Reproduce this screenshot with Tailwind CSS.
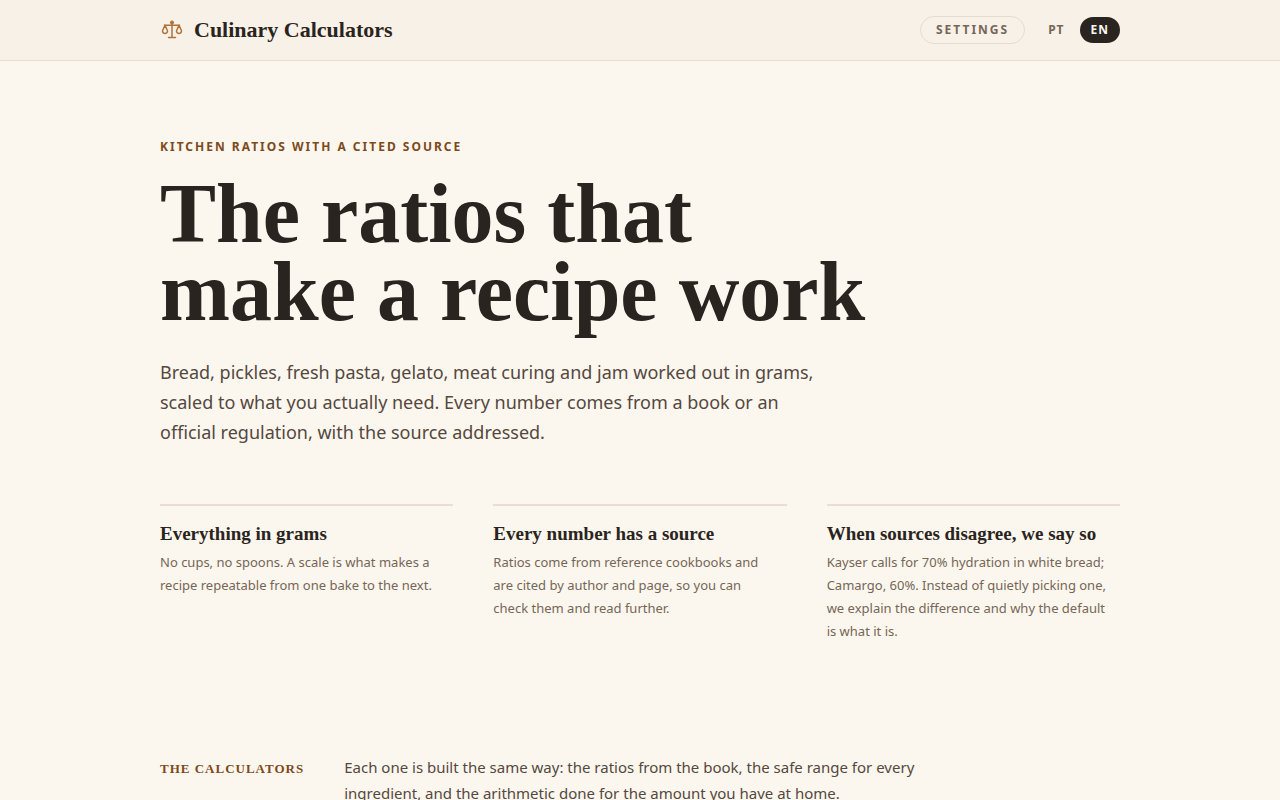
<!DOCTYPE html>
<html lang="en">
<head>
    <meta charset="UTF-8">
    <meta name="viewport" content="width=device-width, initial-scale=1.0">
    <title>Culinary Calculators</title>
    <script src="https://cdn.jsdelivr.net/npm/@tailwindcss/browser@4"></script>
</head>
<body class="min-h-screen bg-[#fcf7ee] font-['Noto_Sans',sans-serif] text-[#2a2420]">

    <header class="border-b border-[#e8dcd0] bg-[#f8f1e7]">
        <div class="mx-auto flex h-15 max-w-[1008px] items-center justify-between px-6">
            <a href="#" class="flex items-center gap-2.5 font-['Liberation_Serif',serif] text-[22px] leading-7 font-bold">
                <svg class="size-6 text-[#b0713a]" viewBox="0 0 24 24" fill="none" stroke="currentColor" stroke-width="1.5" stroke-linecap="round" stroke-linejoin="round" aria-hidden="true">
                    <circle cx="12" cy="4.5" r="1.6" fill="currentColor" stroke-width="1"/>
                    <path d="M12 5v14.5M8.5 19.5h7M4.5 7.2h15"/>
                    <path d="M5 7.2 2.5 12.8c-.3 3.6 5.3 3.6 5 0Z"/>
                    <path d="m19 7.2-2.5 5.6c-.3 3.6 5.3 3.6 5 0Z"/>
                </svg>
                Culinary Calculators
            </a>
            <nav class="flex items-center gap-3 text-xs leading-4 font-bold text-[#756657]">
                <button type="button" class="rounded-full border border-[#e8dcd0] px-[15px] py-[5px] tracking-[2px]">SETTINGS</button>
                <div class="flex gap-1 tracking-[1px]">
                    <a href="#" class="px-[11px] py-[5px]">PT</a>
                    <a href="#" class="rounded-full bg-[#2a2420] px-[11px] py-[5px] text-[#fcf7ee]">EN</a>
                </div>
            </nav>
        </div>
    </header>

    <main class="mx-auto max-w-[1008px] px-6">
        <section class="pt-[78px]">
            <p class="text-xs leading-4 font-bold tracking-[2px] text-[#7c4a1c]">KITCHEN RATIOS WITH A CITED SOURCE</p>
            <h1 class="mt-5 max-w-[800px] font-['Liberation_Serif',serif] text-[84px] leading-[78px] font-bold">The ratios that<br>make a recipe work</h1>
            <p class="mt-[26px] max-w-[670px] text-[18px] leading-[30px] text-[#544840]">Bread, pickles, fresh pasta, gelato, meat curing and jam worked out in grams, scaled to what you actually need. Every number comes from a book or an official regulation, with the source addressed.</p>
        </section>

        <section class="mt-[57px] grid grid-cols-3 gap-10">
            <div class="border-t-2 border-[#ebddd5] pt-4">
                <h2 class="font-['Liberation_Serif',serif] text-[19px] leading-6 font-bold">Everything in grams</h2>
                <p class="mt-[5px] max-w-[285px] text-[13px] leading-[23px] text-[#756657]">No cups, no spoons. A scale is what makes a recipe repeatable from one bake to the next.</p>
            </div>
            <div class="border-t-2 border-[#ebddd5] pt-4">
                <h2 class="font-['Liberation_Serif',serif] text-[19px] leading-6 font-bold">Every number has a source</h2>
                <p class="mt-[5px] max-w-[285px] text-[13px] leading-[23px] text-[#756657]">Ratios come from reference cookbooks and are cited by author and page, so you can check them and read further.</p>
            </div>
            <div class="border-t-2 border-[#ebddd5] pt-4">
                <h2 class="font-['Liberation_Serif',serif] text-[19px] leading-6 font-bold">When sources disagree, we say so</h2>
                <p class="mt-[5px] max-w-[285px] text-[13px] leading-[23px] text-[#756657]">Kayser calls for 70% hydration in white bread; Camargo, 60%. Instead of quietly picking one, we explain the difference and why the default is what it is.</p>
            </div>
        </section>

        <section class="mt-[111px] flex gap-10 pb-20">
            <h2 class="pt-0.5 font-['Liberation_Serif',serif] text-[13px] leading-[26px] font-bold tracking-[1px] whitespace-nowrap text-[#7c4a1c]">THE CALCULATORS</h2>
            <p class="max-w-[590px] text-[15px] leading-[26px] text-[#544840]">Each one is built the same way: the ratios from the book, the safe range for every ingredient, and the arithmetic done for the amount you have at home.</p>
        </section>
    </main>

</body>
</html>
